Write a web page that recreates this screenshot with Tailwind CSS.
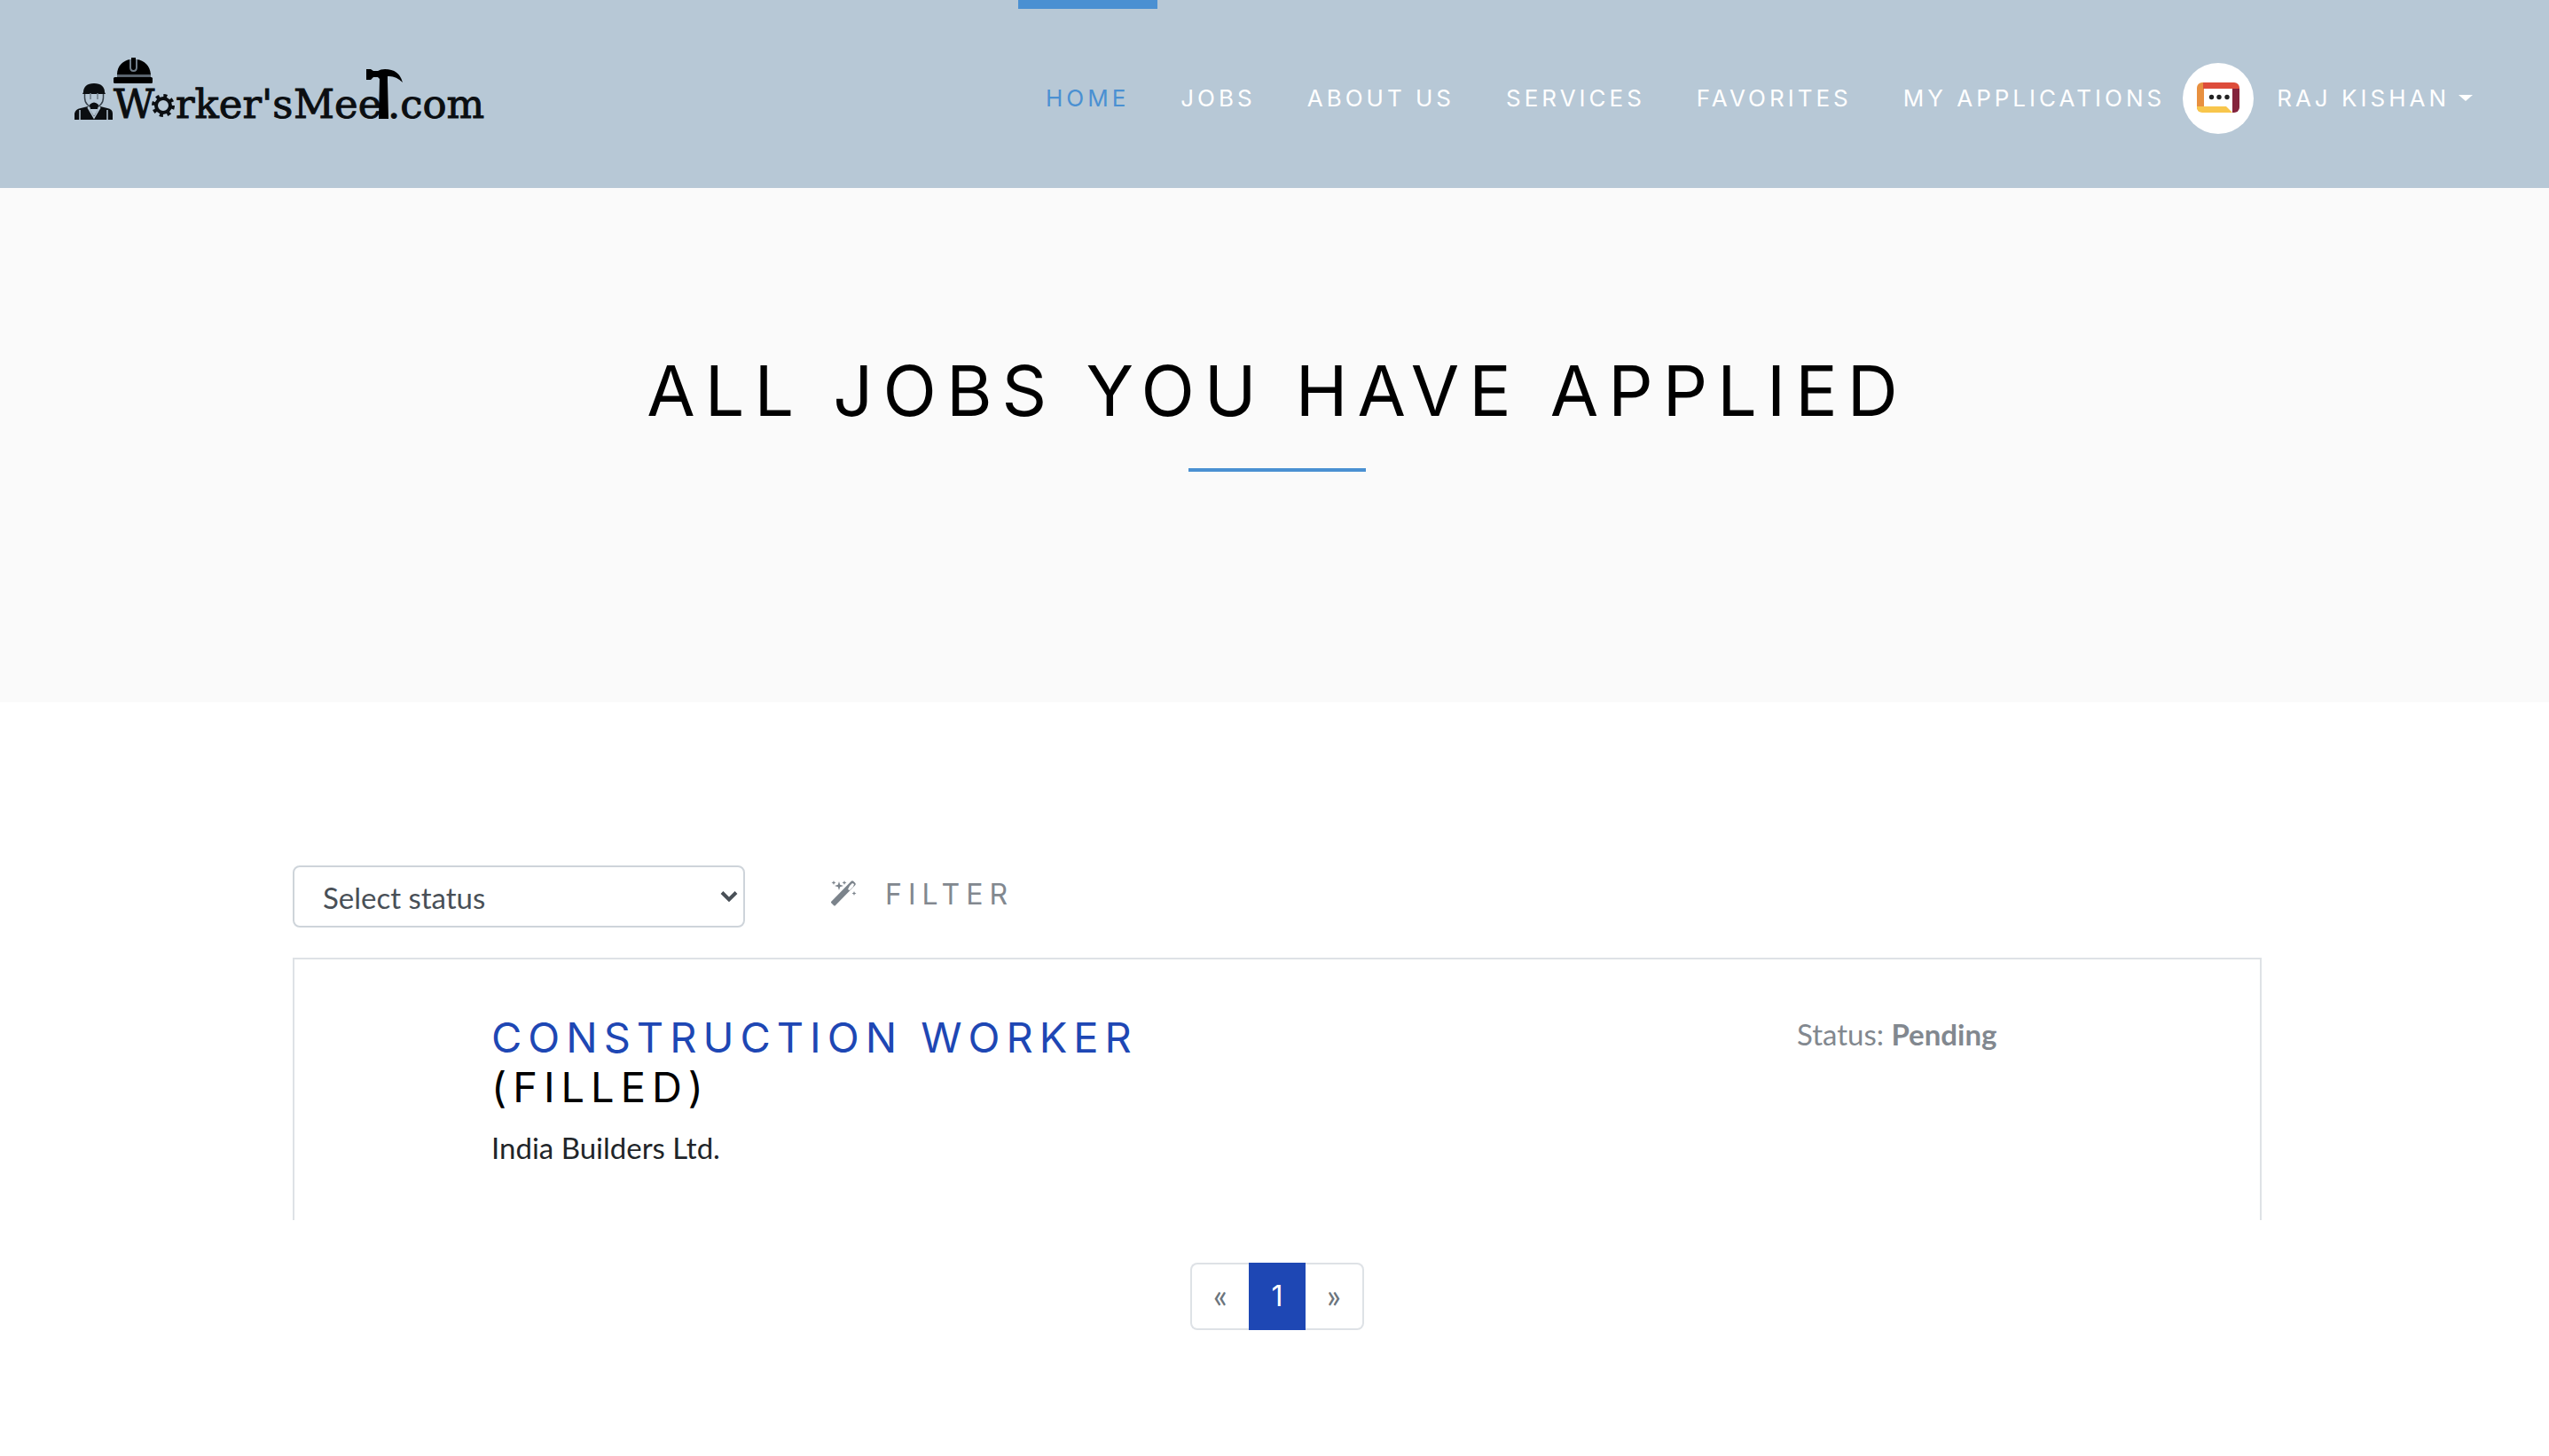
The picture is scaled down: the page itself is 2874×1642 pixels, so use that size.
<!DOCTYPE html>
<html lang="en">
<head>
<meta charset="utf-8">
<meta name="viewport" content="width=device-width, initial-scale=1">
<title>Worker'sMeet.com - My Applications</title>
<script src="https://cdn.jsdelivr.net/npm/@tailwindcss/browser@4"></script>
</head>
<body class="bg-white font-['Lato',sans-serif] text-[33px] leading-[48px] text-[#212529]">

<header class="flex h-[212px] items-stretch justify-between bg-[#b7c8d6] pl-20 pr-[86px] font-['Inter',sans-serif] text-[26px] tracking-[4px] text-white uppercase">
  <a href="#" class="flex shrink-0 items-start pt-16" aria-label="Worker'sMeet.com">
    <svg width="480" height="90" viewBox="80 64 480 90" class="overflow-visible tracking-normal normal-case" fill="#0b0e11">
      <!-- worker -->
      <path d="M94 104c0-6 4-10 12-10s12 4 12 10l1 2H93z"/>
      <path d="M95.500 106v4c0 6 4 11 10.500 11s10.500-5 10.500-11v-4" fill="none" stroke="#39434d" stroke-width="1.500"/>
      <path d="M102 105v7M110 105v7" stroke="#6f7c88" stroke-width="1.500"/>
      <path d="M101 118q5-5 10 0l-1 5h-8z"/>
      <path d="M84 135v-7q1-5 7-6l8-2 7 11 7-11 8 2q6 1 6 6v7z"/>
      <path d="M90 124v11M121 124v11M99 121l7 12 7-12" fill="none" stroke="#b7c8d6" stroke-width="1.500"/>
      <!-- hard hat -->
      <path d="M132 84c0-10 7-16 15-17h7c9 1 15 7 16 17z" fill="#000"/>
      <path d="M132 84h38v3h-38z" fill="#5a646e"/>
      <rect x="128" y="87" width="44" height="7" rx="1.500" fill="#000"/>
      <path d="M147 67v9q0 4 3.500 4t3.500-4v-9" fill="none" stroke="#6f7c88" stroke-width="2"/>
      <rect x="148" y="65" width="5" height="12" fill="#000"/>
      <g font-family="'DejaVu Serif',serif" font-size="45" stroke="#0b0e11" stroke-width="1">
        <text x="128" y="133">W</text>
        <text x="198" y="133">rker's</text>
        <text x="331" y="133">Mee</text>
        <text x="437" y="133">.com</text>
      </g>
      <!-- gear -->
      <circle cx="184" cy="119" r="8" fill="none" stroke="#0b0e11" stroke-width="4"/>
      <circle cx="184" cy="119" r="11" fill="none" stroke="#0b0e11" stroke-width="4" stroke-dasharray="4 4.640"/>
      <!-- hammer -->
      <path d="M413 78h5l3 2h5q3-2 8-2 16 0 20 15-8-8-17-7v5l1 43h-11l1-45-2-2h-5l-3 3h-5z" fill="#000"/>
    </svg>
  </a>
  <div class="flex items-stretch">
    <nav class="flex items-stretch gap-[58px] whitespace-nowrap">
      <a href="#" class="relative flex items-center border-t-[10px] border-transparent text-[#4a90d2]"><span class="absolute -top-[10px] -right-[32px] -left-[31px] h-[10px] bg-[#4a90d2]"></span>Home</a>
      <a href="#" class="flex items-center border-t-[10px] border-transparent">Jobs</a>
      <a href="#" class="flex items-center border-t-[10px] border-transparent">About us</a>
      <a href="#" class="flex items-center border-t-[10px] border-transparent">Services</a>
      <a href="#" class="flex items-center border-t-[10px] border-transparent">Favorites</a>
      <a href="#" class="flex items-center border-t-[10px] border-transparent">My applications</a>
    </nav>
    <button type="button" class="ml-5 flex items-center border-t-[10px] border-transparent tracking-[4px] whitespace-nowrap uppercase">
      <svg width="80" height="80" viewBox="0 0 80 80" class="mr-[26px]">
        <circle cx="40" cy="40" r="40" fill="#fff"/>
        <clipPath id="r"><rect x="16" y="22" width="48" height="34" rx="6"/></clipPath>
        <g clip-path="url(#r)">
          <path d="M16 22h8v27l-8 7z" fill="#e8903f"/>
          <path d="M23 22h41v7H23z" fill="#dd4c3a"/>
          <path d="M56 29h8v27h-8z" fill="#84233c"/>
          <path d="M16 49h33l7 7H16z" fill="#f8c64c"/>
        </g>
        <g fill="#222"><circle cx="32.500" cy="38.500" r="2.700"/><circle cx="41" cy="38.500" r="2.700"/><circle cx="50" cy="38.500" r="2.700"/></g>
      </svg>
      Raj Kishan
      <svg width="16" height="8" viewBox="0 0 16 8" class="ml-[10px]" fill="#fff"><path d="M0 0h16L8 7z"/></svg>
    </button>
  </div>
</header>

<section class="bg-[#fafafa] pt-[180px] pb-[260px] pl-1.5">
  <h1 class="text-center font-['Inter',sans-serif] text-[79px] leading-[96px] tracking-[11px] text-black uppercase">All jobs you have applied</h1>
  <div class="mx-auto mt-10 h-1 w-[200px] bg-[#4a90d2]"></div>
</section>

<main class="pt-[184px] pl-1.5">
  <div class="mx-auto max-w-[2220px]">
    <form class="flex h-[70px] items-stretch">
      <div class="relative w-[510px]">
        <select aria-label="Status" class="h-[70px] w-full appearance-none rounded-lg border-2 border-[#ced4da] bg-white px-8 pt-0.5 text-[#495057]">
          <option>Select status</option>
          <option>Pending</option>
        </select>
        <svg width="20" height="14" viewBox="0 0 20 14" class="pointer-events-none absolute top-7 right-2" fill="none" stroke="#495057" stroke-width="4"><path d="M2 2.500l8 8 8-8"/></svg>
      </div>
      <button type="button" class="ml-24 flex h-[66px] items-center font-['Inter',sans-serif] text-[32px] tracking-[7px] text-[#82888f] uppercase">
        <svg width="30" height="30" viewBox="0 0 30 30" class="mr-8 mb-1" fill="#7b838b">
          <path fill-rule="evenodd" d="M1 25 23.500 2q1.500-1.500 3 0l1.500 1.500q1.500 1.500 0 3L6 29q-1 1-2 0l-3-3zM22 7l-2 4 2 1 4-4 1-3-2-1z"/>
          <path d="M10 2l1.200 3.800L15 7l-3.800 1.200L10 12l-1.200-3.800L5 7l3.800-1.200zM4 1l.700 1.800L6.500 3.500l-1.800.700L4 6l-.700-1.800L1.500 3.500l1.800-.700zM16 1l.700 1.800 1.800.700-1.800.700L16 6l-.700-1.800-1.800-.700 1.800-.700zM27 13l.700 1.800 1.800.700-1.800.700L27 18l-.700-1.800-1.800-.700 1.800-.700z"/>
        </svg>
        Filter
      </button>
    </form>

    <article class="mt-[34px] flex border-2 border-b-0 border-[#dee2e6] pt-[60px] pb-[58px] pl-[10%]">
      <div class="basis-[1472px]">
        <h2 class="mb-4 font-['Inter',sans-serif] text-[47px] leading-[56px] tracking-[7px] text-black uppercase"><a href="#" class="text-[#1e47b4]">Construction worker</a><br>(Filled)</h2>
        <p>India Builders Ltd.</p>
      </div>
      <p class="whitespace-nowrap text-[#82888f]">Status: <strong class="font-bold">Pending</strong></p>
    </article>

    <nav aria-label="Pages" class="mt-12 flex justify-center pb-[142px] text-[#6c757d]">
      <a href="#" class="flex h-[76px] w-[66px] items-center justify-center rounded-l-lg border-2 border-r-0 border-[#dee2e6] pb-1 text-[38px]">«</a>
      <a href="#" aria-current="page" class="flex h-[76px] w-16 items-center justify-center bg-[#1e47b4] font-['Inter',sans-serif] text-[32px] text-white">1</a>
      <a href="#" class="flex h-[76px] w-[66px] items-center justify-center rounded-r-lg border-2 border-l-0 border-[#dee2e6] pb-1 text-[38px]">»</a>
    </nav>
  </div>
</main>
</body>
</html>
